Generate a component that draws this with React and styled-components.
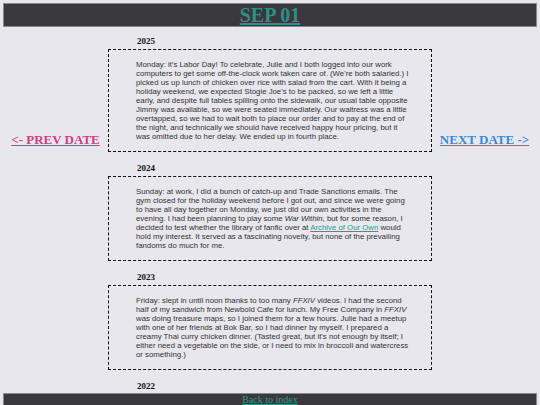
import React from 'react';
import styled, { createGlobalStyle } from 'styled-components';

const GlobalStyle = createGlobalStyle`
  html, body {
    margin: 0;
    padding: 0;
  }
  body {
    background: #e8e7ed;
    margin: 3px;
    font-family: "Liberation Serif", "Times New Roman", serif;
  }
`;

const Header = styled.header`
  background: #38383d;
  border: 1px solid #88888d;
  text-align: center;
  font-size: 20px;
  line-height: 22px;
`;

const Title = styled.a`
  font-family: "Liberation Serif", "Times New Roman", serif;
  font-weight: bold;
  color: #2e8f86;
  text-decoration: underline;
`;

const Layout = styled.div`
  display: grid;
  grid-template-columns: 105px 324px 105px;
  margin-top: 9px;
  padding-bottom: 40px;
`;

const Side = styled.div`
  display: flex;
  justify-content: center;
  align-items: flex-start;
  padding-top: 96px;
`;

const DateLink = styled.a`
  display: block;
  font-family: "Liberation Serif", "Times New Roman", serif;
  font-weight: bold;
  font-size: 13px;
  line-height: 15px;
  white-space: nowrap;
  color: ${({ tone }) => tone};
  text-decoration: underline;
`;

const Entries = styled.div`
  display: flex;
  flex-direction: column;
  gap: 11px;
`;

const Entry = styled.section`
  display: flex;
  flex-direction: column;
  gap: 2px;
`;

const Year = styled.h3`
  margin: 0 0 0 29px;
  font-family: "Liberation Serif", "Times New Roman", serif;
  font-weight: bold;
  font-size: 9px;
  line-height: 11px;
  color: #111;
`;

const Box = styled.div`
  border: 1px dashed #111;
  padding: 10px 19px 10px 27px;
`;

const Text = styled.p`
  margin: 0;
  font-family: "Liberation Sans", Arial, sans-serif;
  font-size: 7.8px;
  line-height: 9px;
  color: #333;
`;

const InlineLink = styled.a`
  color: #2e9a8c;
  text-decoration: underline;
`;

const Footer = styled.footer`
  position: fixed;
  left: 3px;
  right: 3px;
  bottom: 0;
  background: #38383d;
  border: 1px solid #88888d;
  border-bottom: none;
  text-align: center;
  font-size: 10px;
  line-height: 11px;
`;

const BackLink = styled.a`
  font-family: "Liberation Serif", "Times New Roman", serif;
  color: #2e9a8c;
  text-decoration: underline;
`;

const entries = [
  {
    year: '2025',
    body: (
      <>
        Monday: it's Labor Day! To celebrate, Julie and I both logged into our work computers to get
        some off-the-clock work taken care of. (We're both salaried.) I picked us up lunch of chicken
        over rice with salad from the cart. With it being a holiday weekend, we expected Stogie Joe's
        to be packed, so we left a little early, and despite full tables spilling onto the sidewalk,
        our usual table opposite Jimmy was available, so we were seated immediately. Our waitress was
        a little overtapped, so we had to wait both to place our order and to pay at the end of the
        night, and technically we should have received happy hour pricing, but it was omitted due to
        her delay. We ended up in fourth place.
      </>
    ),
  },
  {
    year: '2024',
    body: (
      <>
        Sunday: at work, I did a bunch of catch-up and Trade Sanctions emails. The gym closed for the
        holiday weekend before I got out, and since we were going to have all day together on Monday,
        we just did our own activities in the evening. I had been planning to play some{' '}
        <em>War Within</em>, but for some reason, I decided to test whether the library of fanfic
        over at <InlineLink href="#">Archive of Our Own</InlineLink> would hold my interest. It
        served as a fascinating novelty, but none of the prevailing fandoms do much for me.
      </>
    ),
  },
  {
    year: '2023',
    body: (
      <>
        Friday: slept in until noon thanks to too many <em>FFXIV</em> videos. I had the second half
        of my sandwich from Newbold Cafe for lunch. My Free Company in <em>FFXIV</em> was doing
        treasure maps, so I joined them for a few hours. Julie had a meetup with one of her friends
        at Bok Bar, so I had dinner by myself. I prepared a creamy Thai curry chicken dinner. (Tasted
        great, but it's not enough by itself; I either need a vegetable on the side, or I need to mix
        in broccoli and watercress or something.)
      </>
    ),
  },
  {
    year: '2022',
    body: (
      <>
        Thursday: a quiet day at work, then a short run after dinner and an early night.
      </>
    ),
  },
];

export default function App() {
  return (
    <>
      <GlobalStyle />
      <Header>
        <Title href="#">SEP 01</Title>
      </Header>
      <Layout>
        <Side>
          <DateLink href="#" tone="#cf3f88">&lt;- PREV DATE</DateLink>
        </Side>
        <Entries>
          {entries.map((e) => (
            <Entry key={e.year}>
              <Year>{e.year}</Year>
              <Box>
                <Text>{e.body}</Text>
              </Box>
            </Entry>
          ))}
        </Entries>
        <Side>
          <DateLink href="#" tone="#3a8bd2">NEXT DATE -&gt;</DateLink>
        </Side>
      </Layout>
      <Footer>
        <BackLink href="#">Back to index</BackLink>
      </Footer>
    </>
  );
}
